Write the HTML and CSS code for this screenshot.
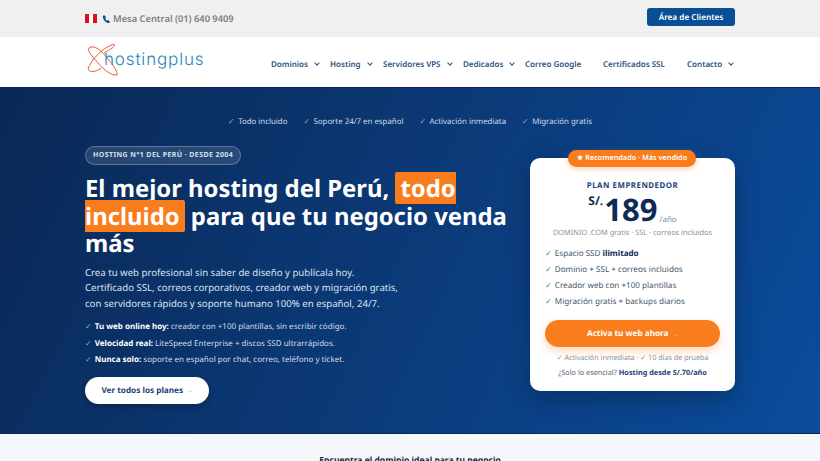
FILE: index.html
```html
<!DOCTYPE html>
<html lang="es">
<head>
    <meta charset="UTF-8">
    <meta name="viewport" content="width=device-width, initial-scale=1.0">
    <title>HostingPlus - Hosting Perú</title>
    <link rel="stylesheet" href="styles.css">
</head>
<body>
    <div class="topbar">
        <div class="wrap topbar-inner">
            <div class="topbar-contact">
                <span class="flag"></span>
                <svg class="phone" width="8" height="10" viewBox="0 0 22 24"><path d="M6.6 1.5 2.8 3C1.500 6 2.500 11 7 16.500s9.500 7.500 13 6.500l1.500-3.500-4-4.500-2.800 2c-2-1-5.700-5.500-6-8l2.800-2z" fill="#0a4f96"/></svg>
                <span>Mesa Central (01) 640 9409</span>
            </div>
            <a class="client-btn">Área de Clientes</a>
        </div>
    </div>

    <div class="navbar">
        <div class="wrap navbar-inner">
            <div class="logo">
                <svg width="34" height="34" viewBox="0 0 34 34" fill="none" stroke="#e0603a" stroke-width="1">
                    <path d="M3 5C8 1 16 8 22 16c6 7 10 13 9 16-5 1-13-5-19-12C6 13 1 8 3 5z"/>
                    <path d="M2 26C5 17 16 5 28 1c2 3-4 5-10 9"/>
                    <path d="M2 26c2 4 8 3 13-1"/>
                </svg>
                <span class="logo-text">hostingplus</span>
            </div>
            <ul class="nav">
                <li class="w-dominios">Dominios<span class="chev"></span></li>
                <li class="w-hosting">Hosting<span class="chev"></span></li>
                <li class="w-vps">Servidores VPS<span class="chev"></span></li>
                <li class="w-ded">Dedicados<span class="chev"></span></li>
                <li class="w-google">Correo Google</li>
                <li class="w-ssl">Certificados SSL</li>
                <li class="w-contacto">Contacto<span class="chev"></span></li>
            </ul>
        </div>
    </div>

    <div class="hero">
        <div class="perks">
            <span><i>✓</i>Todo incluido</span>
            <span><i>✓</i>Soporte 24/7 en español</span>
            <span><i>✓</i>Activación inmediata</span>
            <span><i>✓</i>Migración gratis</span>
        </div>
        <div class="wrap hero-inner">
            <div class="hero-left">
                <div class="badge">HOSTING N°1 DEL PERÚ · DESDE 2004</div>
                <h1>El mejor hosting del Perú, <span class="mark">todo incluido</span> para que tu negocio venda más</h1>
                <p class="lead">Crea tu web profesional sin saber de diseño y publícala hoy.<br>Certificado SSL, correos corporativos, creador web y migración gratis,<br>con servidores rápidos y soporte humano 100% en español, 24/7.</p>
                <ul class="points">
                    <li><b>Tu web online hoy:</b> creador con +100 plantillas, sin escribir código.</li>
                    <li><b>Velocidad real:</b> LiteSpeed Enterprise + discos SSD ultrarrápidos.</li>
                    <li><b>Nunca solo:</b> soporte en español por chat, correo, teléfono y ticket.</li>
                </ul>
                <a class="plans-btn">Ver todos los planes <small>→</small></a>
            </div>
            <div class="card">
                <div class="ribbon">★ Recomendado · Más vendido</div>
                <div class="plan-name">PLAN EMPRENDEDOR</div>
                <div class="price"><span class="cur">S/.</span><span class="num">189</span><span class="per">/año</span></div>
                <div class="plan-sub">DOMINIO .COM gratis · SSL · correos incluidos</div>
                <ul class="features">
                    <li>Espacio SSD <b>ilimitado</b></li>
                    <li>Dominio + SSL + correos incluidos</li>
                    <li>Creador web con +100 plantillas</li>
                    <li>Migración gratis + backups diarios</li>
                </ul>
                <a class="cta">Activa tu web ahora <small>→</small></a>
                <div class="note">✓ Activación inmediata · ✓ 10 días de prueba</div>
                <div class="alt">¿Solo lo esencial? <b>Hosting desde S/.70/año</b></div>
            </div>
        </div>
    </div>

    <div class="domain">
        <h3>Encuentra el dominio ideal para tu negocio</h3>
    </div>
</body>
</html>
```

FILE: styles.css
```css
* {
    margin: 0;
    padding: 0;
    box-sizing: border-box;
}

html, body {
    height: 461px;
    overflow: hidden;
}

body {
    font-family: 'Noto Sans', 'Open Sans', sans-serif;
    background: #f4f8fc;
    color: #14305c;
    text-rendering: geometricPrecision;
}

.wrap {
    width: 650px;
    margin: 0 auto;
}

.topbar {
    background: #f0f0f0;
    height: 37px;
}

.topbar-inner {
    height: 100%;
    display: flex;
    align-items: center;
    justify-content: space-between;
}

.topbar-contact {
    display: flex;
    align-items: center;
    font-size: 9.300px;
    font-weight: 600;
    color: #7d7d7d;
}

.flag {
    width: 12px;
    height: 9px;
    margin-right: 5px;
    background: linear-gradient(90deg, #d91023 33%, #fff 33%, #fff 66%, #d91023 66%);
}

.phone {
    margin-right: 3px;
}

.client-btn {
    background: #0a4f96;
    color: #fff;
    font-size: 8.200px;
    font-weight: 600;
    width: 88px;
    height: 18px;
    margin-top: -3px;
    border-radius: 3px;
    display: flex;
    align-items: center;
    justify-content: center;
}

.navbar {
    background: #fff;
    height: 50px;
}

.navbar-inner {
    height: 100%;
    display: flex;
    align-items: center;
}

.logo {
    display: flex;
    align-items: center;
    width: 186px;
    margin-left: 1px;
    margin-top: -4px;
}

.logo svg {
    flex-shrink: 0;
}

.logo-text {
    font-family: 'Inter', sans-serif;
    font-size: 17px;
    font-weight: 300;
    color: #2a86b8;
    margin-left: -16px;
    letter-spacing: 0.85px;
}

.nav {
    list-style: none;
    display: flex;
    font-size: 8px;
    font-weight: 600;
    color: #2d5280;
    margin-top: 4px;
}

.nav li {
    display: flex;
    align-items: center;
    white-space: nowrap;
}

.w-dominios { width: 59px; }
.w-hosting { width: 53px; }
.w-vps { width: 80px; }
.w-ded { width: 62px; }
.w-google { width: 78px; }
.w-ssl { width: 84px; }
.w-contacto { width: 48px; }

.chev {
    flex-shrink: 0;
    width: 4px;
    height: 4px;
    margin-left: 7px;
    margin-top: -2px;
    border-right: 1px solid #2d5280;
    border-bottom: 1px solid #2d5280;
    transform: rotate(45deg);
}

.hero {
    height: 347px;
    color: #fff;
    background: linear-gradient(115deg, #0a2855 0%, #0b3a78 50%, #0a4c9c 100%);
    border-top: 1px solid #0a2a55;
    border-bottom: 1px solid #0a2a55;
}

.perks {
    display: flex;
    justify-content: center;
    gap: 16px;
    font-size: 7.850px;
    color: #cfdcec;
    padding-top: 29px;
    height: 41px;
}

.perks i {
    font-style: normal;
    opacity: 0.7;
    margin-right: 3.500px;
}

.hero-inner {
    display: flex;
    justify-content: space-between;
}

.hero-left {
    width: 430px;
    padding-top: 17px;
    margin-top: -6px;
}

.badge {
    display: inline-block;
    height: 19px;
    line-height: 17px;
    padding: 0 7px;
    font-size: 7px;
    font-weight: 700;
    letter-spacing: 0.4px;
    color: #d5e0ee;
    background: rgba(255, 255, 255, 0.12);
    border: 1px solid rgba(255, 255, 255, 0.25);
    border-radius: 10px;
}

h1 {
    font-size: 23.850px;
    line-height: 27.500px;
    font-weight: 700;
    margin-top: 10px;
}

.mark {
    background: #f97d1c;
    padding: 0 5px;
    border-radius: 2px;
}

.lead {
    font-size: 9.650px;
    line-height: 15.500px;
    color: #dbe5f1;
    margin-top: 7px;
}

.points {
    list-style: none;
    font-size: 8px;
    color: #cfdcec;
    margin-top: 8px;
}

.points li {
    height: 16.500px;
    line-height: 16px;
}

.points li::before {
    content: "✓";
    opacity: 0.7;
    margin-right: 3px;
}

.points b {
    color: #fff;
}

.plans-btn {
    display: flex;
    align-items: center;
    justify-content: center;
    gap: 4px;
    width: 124px;
    height: 27px;
    margin-top: 8px;
    background: #fff;
    color: #1a4276;
    font-size: 8.200px;
    font-weight: 700;
    border-radius: 14px;
    box-shadow: 0 2px 6px rgba(0, 0, 0, 0.25);
}

.plans-btn small,
.cta small {
    font-size: 5.500px;
    font-weight: 400;
    opacity: 0.6;
}

.card {
    position: relative;
    width: 205px;
    height: 233px;
    margin-top: 29px;
    padding-top: 23px;
    background: #fff;
    color: #33475f;
    text-align: center;
    border-radius: 10px;
    box-shadow: 0 8px 24px rgba(0, 0, 0, 0.25);
}

.ribbon {
    position: absolute;
    top: -8px;
    left: 38px;
    width: 128px;
    height: 17px;
    line-height: 17px;
    font-size: 7.300px;
    font-weight: 600;
    color: #fff;
    background: #f97d1c;
    border-radius: 9px;
    box-shadow: 0 2px 6px rgba(249, 125, 28, 0.35);
    white-space: nowrap;
}

.plan-name {
    font-size: 7.900px;
    font-weight: 700;
    letter-spacing: 0.5px;
    color: #1a4276;
    line-height: 10px;
}

.price {
    display: flex;
    justify-content: center;
    align-items: flex-end;
    height: 34px;
    margin-top: 2px;
    color: #0f2a55;
}

.cur {
    font-size: 12px;
    font-weight: 700;
    align-self: flex-start;
    line-height: 16px;
    margin-right: 1px;
}

.num {
    font-size: 31px;
    font-weight: 700;
    line-height: 34px;
}

.per {
    font-size: 8px;
    color: #7f8a99;
    margin-left: 2px;
    line-height: 14px;
}

.plan-sub {
    font-size: 7.400px;
    color: #8a929e;
    line-height: 12px;
}

.features {
    list-style: none;
    text-align: left;
    font-size: 8.100px;
    color: #45566b;
    margin: 7px 0 0 15px;
}

.features li {
    height: 16px;
    line-height: 16px;
}

.features li::before {
    content: "✓";
    color: #1f9a60;
    margin-right: 3px;
}

.features b {
    color: #0f2a55;
}

.cta {
    display: flex;
    align-items: center;
    justify-content: center;
    gap: 4px;
    width: 175px;
    height: 27px;
    margin: 10px auto 0;
    background: #f97d1c;
    color: #fff;
    font-size: 8.200px;
    font-weight: 700;
    border-radius: 14px;
    box-shadow: 0 4px 10px rgba(249, 125, 28, 0.3);
}

.note {
    font-size: 7.200px;
    color: #8a929e;
    margin-top: 5px;
    line-height: 12px;
}

.alt {
    font-size: 7.300px;
    color: #5a6675;
    margin-top: 3px;
    line-height: 12px;
}

.alt b {
    color: #1a4276;
}

.domain {
    padding-top: 21px;
    text-align: center;
}

.domain h3 {
    font-size: 8.500px;
    font-weight: 700;
    color: #1b2a3d;
}
```
